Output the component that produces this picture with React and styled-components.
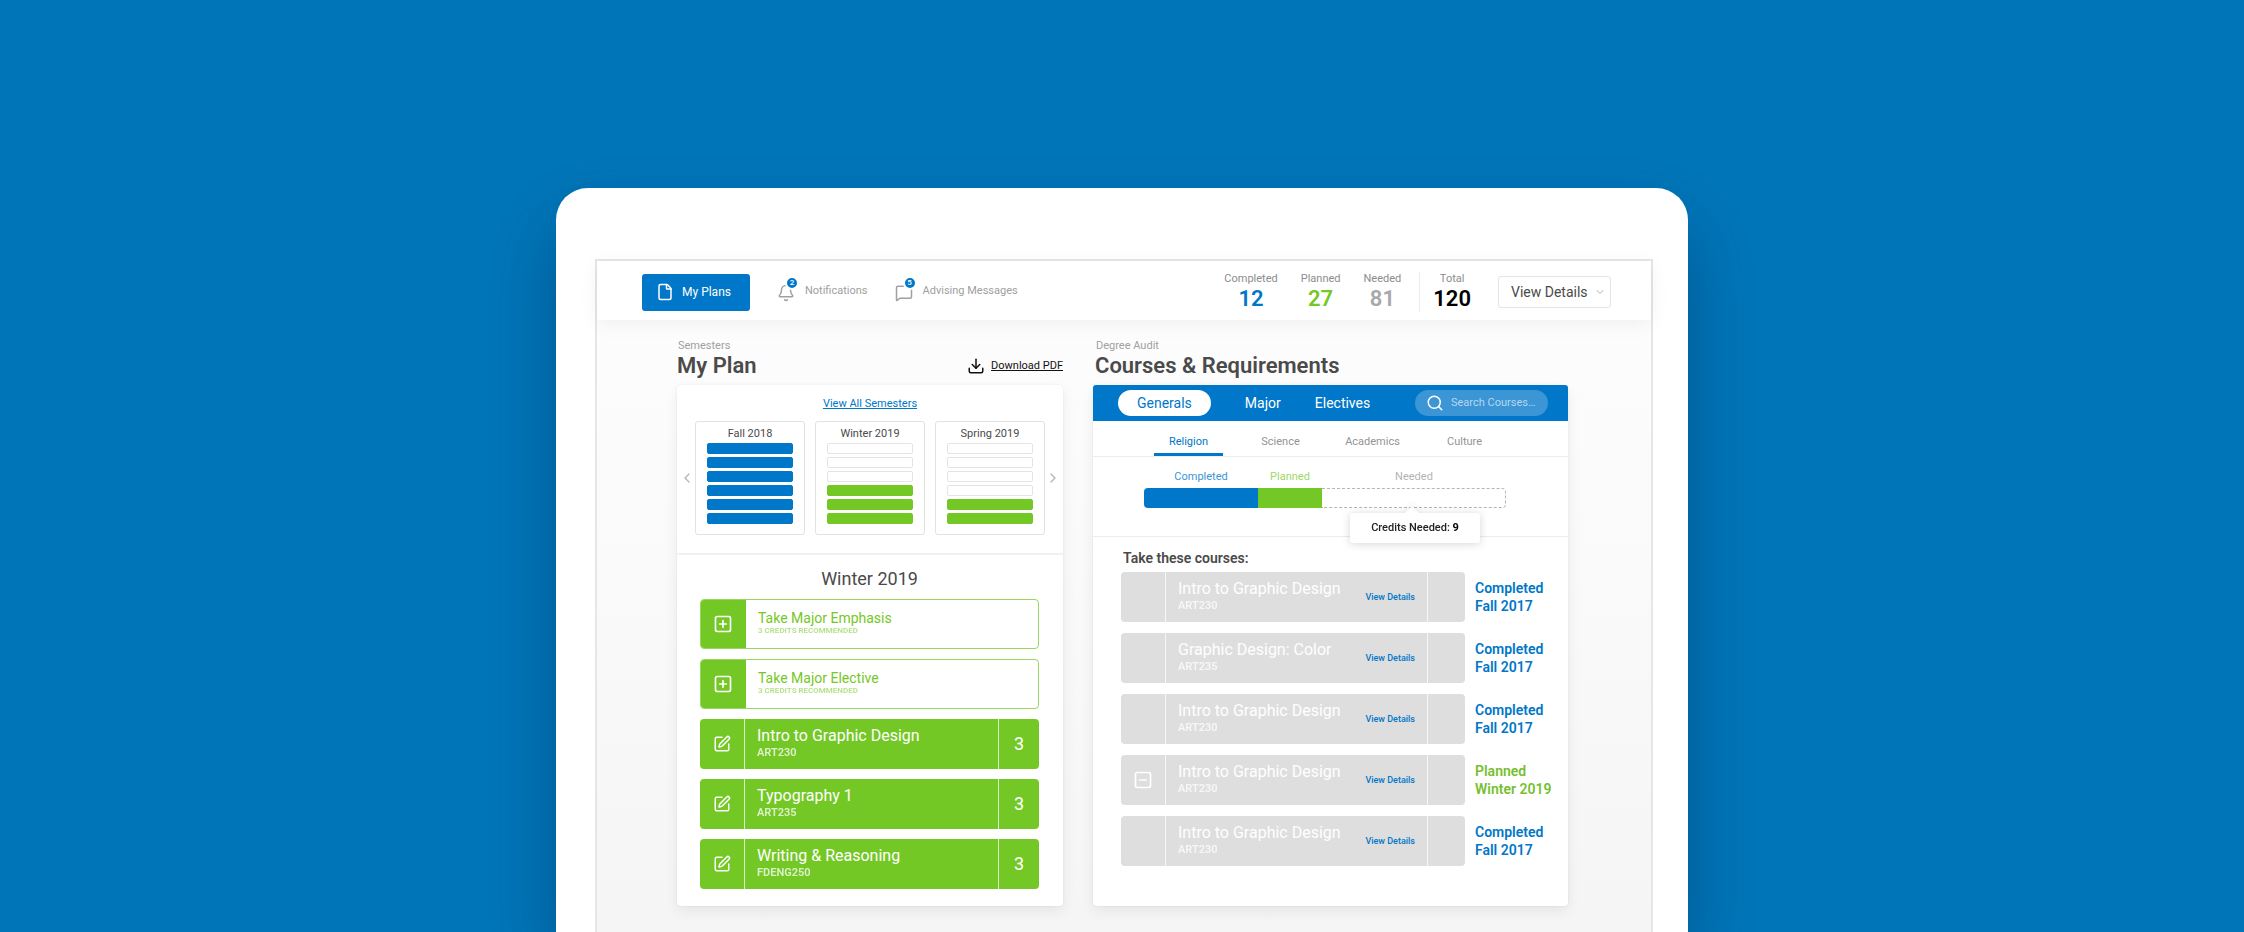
import React from "react";
import styled, { createGlobalStyle, css } from "styled-components";
import {
  Bell,
  ChevronDown,
  ChevronLeft,
  ChevronRight,
  Download,
  File,
  MessageSquare,
  Search,
  SquareMinus,
  SquarePen,
  SquarePlus,
} from "lucide-react";

const blue = "#0077c8";
const green = "#74c825";

const GlobalStyle = createGlobalStyle`
  *, *::before, *::after { box-sizing: border-box; }
  body {
    margin: 0;
    font-family: Roboto, "Liberation Sans", sans-serif;
    font-size: 11px;
    line-height: 16px;
    color: #4a4a4a;
    background: #0076b8;
  }
  h1, h2, h3, p, ul, dl, dd { margin: 0; padding: 0; }
  ul { list-style: none; }
  button, input, select { font: inherit; color: inherit; margin: 0; }
  button { border: 0; padding: 0; background: none; cursor: pointer; }
  a { color: inherit; }
  svg { display: block; flex: none; }
`;

const Page = styled.div`
  min-height: 100vh;
  display: flex;
  flex-direction: column;
  align-items: center;
  padding: 188px 24px 0;
  overflow: hidden;
`;

const Device = styled.div`
  flex: 1;
  display: flex;
  width: 100%;
  max-width: 1132px;
  padding: 71px 35px 0 39px;
  background: #fff;
  border-radius: 32px 32px 0 0;
  box-shadow: 0 36px 70px rgba(0, 40, 90, 0.4);
`;

const Screen = styled.div`
  flex: 1;
  display: flex;
  flex-direction: column;
  border: 2px solid #e6e6e6;
  border-bottom: 0;
`;

const TopBar = styled.header`
  position: relative;
  display: flex;
  align-items: center;
  height: 59px;
  padding: 3px 40px 0 45px;
  background: #fff;
  box-shadow: 0 4px 20px rgba(0, 0, 0, 0.06);
`;

const Nav = styled.nav`
  display: flex;
  align-items: center;
  gap: 27px;
`;

const PlansButton = styled.button`
  display: flex;
  align-items: center;
  gap: 8px;
  height: 37px;
  padding: 0 19px 0 14px;
  border-radius: 3px;
  background: ${blue};
  color: #fff;
  font-size: 12px;
`;

const NavButton = styled.button`
  display: flex;
  align-items: center;
  gap: 10px;
  padding-bottom: 2px;
  color: #a0a0a0;
`;

const IconWithBadge = styled.span`
  position: relative;
  display: block;
  padding-top: 4px;
`;

const Badge = styled.span`
  position: absolute;
  top: -4px;
  right: -4px;
  width: 14px;
  height: 14px;
  border: 2px solid #fff;
  border-radius: 50%;
  background: ${blue};
  color: #fff;
  font-size: 8px;
  line-height: 10px;
  font-weight: 500;
  text-align: center;
`;

const Stats = styled.dl`
  display: flex;
  gap: 23px;
  margin-left: auto;
`;

const Stat = styled.div`
  display: flex;
  flex-direction: column;
  align-items: center;
  color: ${(p) => p.$color};
`;

const StatLabel = styled.dt`
  line-height: 14px;
  color: #8c8c8c;
`;

const StatValue = styled.dd`
  font-size: 22px;
  line-height: 26px;
  font-weight: 600;
`;

const TotalStats = styled(Stats)`
  margin: 0 27px 0 18px;
  padding-left: 13px;
  border-left: 1px solid #ececec;
`;

const SelectWrap = styled.label`
  position: relative;
  display: flex;
  align-items: center;
  svg {
    position: absolute;
    right: 5px;
    color: #b0b0b0;
    pointer-events: none;
  }
`;

const DetailsSelect = styled.select`
  appearance: none;
  width: 113px;
  height: 32px;
  padding: 0 20px 0 12px;
  border: 1px solid #e4e4e4;
  border-radius: 3px;
  background: #fff;
  font-size: 14px;
`;

const Main = styled.main`
  flex: 1;
  display: grid;
  grid-template-columns: 386fr 475fr;
  align-content: start;
  gap: 30px;
  padding: 18px 83px 24px 80px;
  background: linear-gradient(#fdfdfd, #f5f5f5);
`;

const Column = styled.section`
  display: flex;
  flex-direction: column;
  min-width: 0;
`;

const PanelHeader = styled.header`
  padding: 0 0 7px ${(p) => p.$indent || 0}px;
`;

const Eyebrow = styled.p`
  padding-left: 1px;
  color: #a0a0a0;
`;

const HeadingRow = styled.div`
  display: flex;
  justify-content: space-between;
  align-items: center;
`;

const Heading = styled.h1`
  font-size: 22px;
  line-height: 24px;
  font-weight: 600;
`;

const DownloadLink = styled.a`
  display: flex;
  align-items: center;
  gap: 6px;
  color: #111;
`;

const Panel = styled.div`
  flex: 1;
  background: #fff;
  border-radius: 4px;
  box-shadow: 0 5px 14px rgba(0, 0, 0, 0.07), 0 0 2px rgba(0, 0, 0, 0.08);
`;

const Overview = styled.div`
  display: flex;
  flex-direction: column;
  align-items: center;
  gap: 8px;
  padding: 10px 2px 18px;
  border-bottom: 2px solid #f1f1f1;
`;

const ViewAllLink = styled.a`
  line-height: 18px;
  color: ${blue};
`;

const Carousel = styled.div`
  display: flex;
  align-items: center;
  width: 100%;
`;

const ArrowButton = styled.button`
  color: #b5b5b5;
`;

const SemesterList = styled.ul`
  flex: 1;
  display: grid;
  grid-template-columns: repeat(3, 1fr);
  gap: 10px;
`;

const SemesterCard = styled.li`
  padding: 3px 11px 10px;
  border: 1px solid #e2e2e2;
  border-radius: 3px;
`;

const SemesterName = styled.h3`
  font-size: 11px;
  line-height: 18px;
  font-weight: 400;
  text-align: center;
`;

const Slots = styled.div`
  display: grid;
  gap: 3px;
`;

const fills = { blue, green, empty: "#fff" };

const Slot = styled.span`
  height: 11px;
  border-radius: 2px;
  background: ${(p) => fills[p.$fill]};
  border: 1px solid ${(p) => (p.$fill === "empty" ? "#e4e4e4" : fills[p.$fill])};
`;

const Schedule = styled.div`
  padding: 12px 24px 17px 23px;
`;

const ScheduleTitle = styled.h2`
  padding-bottom: 8px;
  font-size: 18px;
  line-height: 24px;
  font-weight: 400;
  text-align: center;
`;

const RowList = styled.ul`
  display: grid;
  gap: ${(p) => p.$gap}px;
`;

const tones = {
  green: css`
    background: ${green};
    color: #fff;
  `,
  outline: css`
    background: #fff;
    color: ${green};
    border: 1px solid #98d760;
  `,
  grey: css`
    background: #dedede;
    color: #fff;
  `,
};

const CourseCard = styled.div`
  flex: 1;
  display: flex;
  height: 50px;
  border-radius: 4px;
  overflow: hidden;
  ${(p) => tones[p.$tone]}
`;

const ActionCell = styled.div`
  display: flex;
  align-items: center;
  justify-content: center;
  width: 45px;
  color: #fff;
  background: ${(p) => (p.$filled ? green : "transparent")};
  border-right: 1px solid ${(p) => (p.$filled ? green : "rgba(255, 255, 255, 0.75)")};
`;

const CourseText = styled.div`
  flex: 1;
  display: flex;
  flex-direction: column;
  justify-content: center;
  padding: 0 0 2px 12px;
`;

const CourseName = styled.h3`
  font-size: ${(p) => (p.$small ? 14 : 16)}px;
  line-height: ${(p) => (p.$small ? 16 : 20)}px;
  font-weight: 400;
`;

const CourseCode = styled.p`
  font-size: ${(p) => (p.$small ? 8 : 11)}px;
  line-height: ${(p) => (p.$small ? 10 : 14)}px;
  font-weight: 600;
  opacity: ${(p) => (p.$small ? 0.55 : 0.75)};
`;

const Credits = styled.div`
  display: flex;
  align-items: center;
  justify-content: center;
  width: ${(p) => p.$width}px;
  border-left: 1px solid rgba(255, 255, 255, 0.75);
  font-size: 18px;
`;

const TabBar = styled.div`
  display: flex;
  align-items: center;
  gap: 34px;
  height: 36px;
  padding: 0 20px 0 25px;
  border-radius: 3px 3px 0 0;
  background: ${blue};
  color: #fff;
`;

const Tab = styled.button`
  height: 26px;
  font-size: 14px;
  ${(p) =>
    p.$active &&
    css`
      padding: 0 19px;
      border-radius: 13px;
      background: #fff;
      color: ${blue};
    `}
`;

const SearchBox = styled.label`
  display: flex;
  align-items: center;
  gap: 7px;
  width: 133px;
  height: 26px;
  margin-left: auto;
  padding: 0 8px 0 11px;
  border-radius: 13px;
  background: #3c95d4;
`;

const SearchInput = styled.input`
  min-width: 0;
  flex: 1;
  padding: 0;
  border: 0;
  outline: 0;
  background: none;
  &::placeholder {
    color: #b4d8f1;
    opacity: 1;
  }
`;

const SubTabs = styled.div`
  display: flex;
  gap: 23px;
  padding: 0 61px;
  border-bottom: 1px solid #ececec;
`;

const SubTab = styled.button`
  width: 69px;
  height: 35px;
  padding-top: 9px;
  border-bottom: 3px solid ${(p) => (p.$active ? blue : "transparent")};
  color: ${(p) => (p.$active ? blue : "#949494")};
`;

const Progress = styled.div`
  display: grid;
  grid-template-columns: 114fr 64fr 184fr;
  padding: 12px 62px 28px 51px;
  border-bottom: 1px solid #ececec;
`;

const Segment = styled.div`
  position: relative;
  display: grid;
  gap: 3px;
  text-align: center;
  color: ${(p) => p.$color};
`;

const SegmentBar = styled.span`
  height: 20px;
  background: ${(p) => p.$fill || "#fff"};
  ${(p) => p.$first && "border-radius: 4px 0 0 4px;"}
  ${(p) =>
    p.$dashed &&
    css`
      border: 1px dashed #b5b5b5;
      border-left: 0;
      border-radius: 0 4px 4px 0;
    `}
`;

const Tooltip = styled.span`
  position: absolute;
  top: 100%;
  left: 50%;
  width: 130px;
  margin: 5px 0 0 -64px;
  line-height: 30px;
  font-weight: 500;
  color: #222;
  background: #fff;
  border-radius: 3px;
  filter: drop-shadow(0 1px 4px rgba(0, 0, 0, 0.16));
  &::before {
    content: "";
    position: absolute;
    top: -5px;
    left: 57px;
    width: 10px;
    height: 10px;
    background: #fff;
    transform: rotate(45deg);
  }
  b {
    font-weight: 700;
    color: #000;
  }
`;

const Requirements = styled.div`
  padding: 12px 24px 40px 28px;
`;

const RequirementsTitle = styled.h2`
  padding: 0 0 5px 2px;
  font-size: 14px;
  line-height: 18px;
  font-weight: 600;
`;

const RequirementRow = styled.li`
  display: flex;
  align-items: center;
  gap: 10px;
`;

const RowLink = styled.a`
  align-self: center;
  margin-right: 12px;
  font-size: 9px;
  line-height: 14px;
  font-weight: 500;
  color: ${blue};
  text-decoration: none;
`;

const Status = styled.p`
  width: 69px;
  font-size: 14px;
  line-height: 18px;
  font-weight: 600;
  white-space: nowrap;
  color: ${(p) => (p.$planned ? "#76bf31" : blue)};
`;

const semesters = [
  { name: "Fall 2018", fill: "blue", count: 6 },
  { name: "Winter 2019", fill: "green", count: 3 },
  { name: "Spring 2019", fill: "green", count: 2 },
];

const schedule = [
  { name: "Take Major Emphasis", code: "3 CREDITS RECOMMENDED", open: true },
  { name: "Take Major Elective", code: "3 CREDITS RECOMMENDED", open: true },
  { name: "Intro to Graphic Design", code: "ART230", credits: 3 },
  { name: "Typography 1", code: "ART235", credits: 3 },
  { name: "Writing & Reasoning", code: "FDENG250", credits: 3 },
];

const requirements = [
  { name: "Intro to Graphic Design", code: "ART230", term: "Fall 2017" },
  { name: "Graphic Design: Color", code: "ART235", term: "Fall 2017" },
  { name: "Intro to Graphic Design", code: "ART230", term: "Fall 2017" },
  { name: "Intro to Graphic Design", code: "ART230", term: "Winter 2019", planned: true },
  { name: "Intro to Graphic Design", code: "ART230", term: "Fall 2017" },
];

function StatItem({ label, value, color }) {
  return (
    <Stat $color={color}>
      <StatLabel>{label}</StatLabel>
      <StatValue>{value}</StatValue>
    </Stat>
  );
}

function Semester({ name, fill, count }) {
  return (
    <SemesterCard>
      <SemesterName>{name}</SemesterName>
      <Slots>
        {Array.from({ length: 6 }, (_, i) => (
          <Slot key={i} $fill={i >= 6 - count ? fill : "empty"} />
        ))}
      </Slots>
    </SemesterCard>
  );
}

function MyPlan() {
  return (
    <Column>
      <PanelHeader>
        <Eyebrow>Semesters</Eyebrow>
        <HeadingRow>
          <Heading>My Plan</Heading>
          <DownloadLink href="#pdf">
            <Download size={18} />
            Download PDF
          </DownloadLink>
        </HeadingRow>
      </PanelHeader>
      <Panel>
        <Overview>
          <ViewAllLink href="#semesters">View All Semesters</ViewAllLink>
          <Carousel>
            <ArrowButton aria-label="Previous semesters">
              <ChevronLeft size={16} />
            </ArrowButton>
            <SemesterList>
              {semesters.map((s) => (
                <Semester key={s.name} {...s} />
              ))}
            </SemesterList>
            <ArrowButton aria-label="Next semesters">
              <ChevronRight size={16} />
            </ArrowButton>
          </Carousel>
        </Overview>
        <Schedule>
          <ScheduleTitle>Winter 2019</ScheduleTitle>
          <RowList $gap={10}>
            {schedule.map((c) => (
              <li key={c.name}>
                <CourseCard $tone={c.open ? "outline" : "green"}>
                  <ActionCell $filled={c.open}>
                    {c.open ? <SquarePlus size={20} /> : <SquarePen size={18} />}
                  </ActionCell>
                  <CourseText>
                    <CourseName $small={c.open}>{c.name}</CourseName>
                    <CourseCode $small={c.open}>{c.code}</CourseCode>
                  </CourseText>
                  {c.credits && <Credits $width={41}>{c.credits}</Credits>}
                </CourseCard>
              </li>
            ))}
          </RowList>
        </Schedule>
      </Panel>
    </Column>
  );
}

function DegreeAudit() {
  return (
    <Column>
      <PanelHeader $indent={2}>
        <Eyebrow>Degree Audit</Eyebrow>
        <HeadingRow>
          <Heading as="h2">Courses &amp; Requirements</Heading>
        </HeadingRow>
      </PanelHeader>
      <Panel>
        <TabBar>
          <Tab $active>Generals</Tab>
          <Tab>Major</Tab>
          <Tab>Electives</Tab>
          <SearchBox>
            <Search size={18} />
            <SearchInput aria-label="Search courses" placeholder="Search Courses…" />
          </SearchBox>
        </TabBar>
        <SubTabs>
          <SubTab $active>Religion</SubTab>
          <SubTab>Science</SubTab>
          <SubTab>Academics</SubTab>
          <SubTab>Culture</SubTab>
        </SubTabs>
        <Progress>
          <Segment $color="#3a94d6">
            Completed
            <SegmentBar $fill={blue} $first />
          </Segment>
          <Segment $color="#9dd868">
            Planned
            <SegmentBar $fill={green} />
          </Segment>
          <Segment $color="#b4b4b4">
            Needed
            <SegmentBar $dashed />
            <Tooltip role="tooltip">
              Credits Needed: <b>9</b>
            </Tooltip>
          </Segment>
        </Progress>
        <Requirements>
          <RequirementsTitle>Take these courses:</RequirementsTitle>
          <RowList $gap={11}>
            {requirements.map((c, i) => (
              <RequirementRow key={i}>
                <CourseCard $tone="grey">
                  <ActionCell>{c.planned && <SquareMinus size={20} />}</ActionCell>
                  <CourseText>
                    <CourseName>{c.name}</CourseName>
                    <CourseCode>{c.code}</CourseCode>
                  </CourseText>
                  <RowLink href="#details">View Details</RowLink>
                  <Credits $width={38} />
                </CourseCard>
                <Status $planned={c.planned}>
                  {c.planned ? "Planned" : "Completed"}
                  <br />
                  {c.term}
                </Status>
              </RequirementRow>
            ))}
          </RowList>
        </Requirements>
      </Panel>
    </Column>
  );
}

export default function App() {
  return (
    <Page>
      <GlobalStyle />
      <Device>
        <Screen>
          <TopBar>
            <Nav>
              <PlansButton>
                <File size={18} />
                My Plans
              </PlansButton>
              <NavButton>
                <IconWithBadge>
                  <Bell size={18} />
                  <Badge>2</Badge>
                </IconWithBadge>
                Notifications
              </NavButton>
              <NavButton>
                <IconWithBadge>
                  <MessageSquare size={18} />
                  <Badge>5</Badge>
                </IconWithBadge>
                Advising Messages
              </NavButton>
            </Nav>
            <Stats>
              <StatItem label="Completed" value="12" color={blue} />
              <StatItem label="Planned" value="27" color={green} />
              <StatItem label="Needed" value="81" color="#a8a8a8" />
            </Stats>
            <TotalStats>
              <StatItem label="Total" value="120" color="#000" />
            </TotalStats>
            <SelectWrap>
              <DetailsSelect aria-label="View details">
                <option>View Details</option>
              </DetailsSelect>
              <ChevronDown size={12} />
            </SelectWrap>
          </TopBar>
          <Main>
            <MyPlan />
            <DegreeAudit />
          </Main>
        </Screen>
      </Device>
    </Page>
  );
}
